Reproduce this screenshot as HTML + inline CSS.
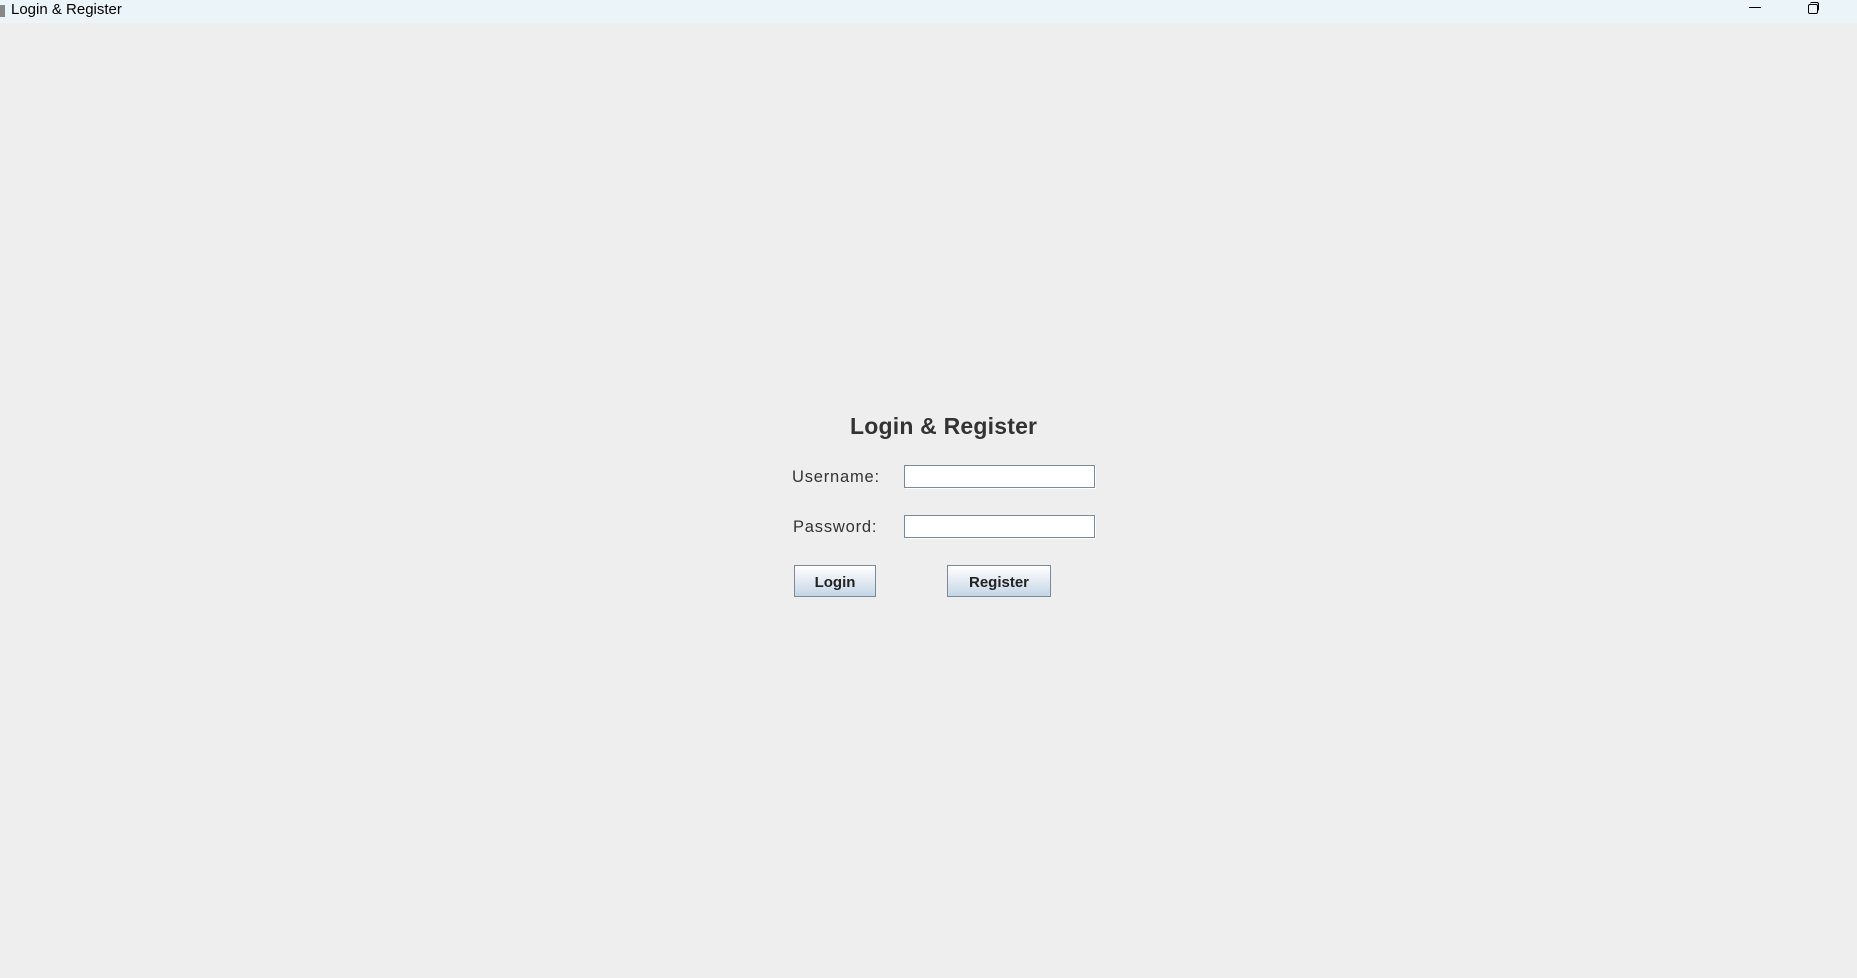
<!DOCTYPE html>
<html><head><style>
body{margin:0;width:1857px;height:978px;background:#eeeeee;font-family:"Liberation Sans",sans-serif;position:relative;overflow:hidden}
.tb{position:absolute;left:0;top:0;width:1857px;height:23px;background:#ebf4f9}
.t{position:absolute;color:#333}
.f{position:absolute;background:#fff;border:1px solid #7a8a99;box-shadow:1px 1px 0 #fff}
.b{position:absolute;border:1px solid #7a8a99;background:linear-gradient(#ffffff,#dde6f0 60%,#c4d5e6);font-weight:bold;font-size:15px;color:#222;text-align:center;line-height:33px;box-sizing:border-box}
</style></head><body>
<div class="tb"></div>
<div style="position:absolute;left:0;top:5px;width:5px;height:12px;background:#888"></div>
<div class="t" style="left:11px;top:1px;font-size:15px;line-height:18px;color:#000">Login &amp; Register</div>
<div style="position:absolute;left:1749px;top:7px;width:12px;height:1px;background:#000"></div>
<div style="position:absolute;left:1808px;top:4px;width:8px;height:8px;border:1px solid #000;border-radius:2px"></div>
<div style="position:absolute;left:1810px;top:2px;width:8px;height:8px;border-top:1px solid #000;border-right:1px solid #000;border-radius:2px"></div>
<div class="t" style="left:850px;top:413px;font-size:23px;font-weight:bold;letter-spacing:0.2px">Login &amp; Register</div>
<div class="t" style="left:792px;top:468px;font-size:16.5px;letter-spacing:0.8px">Username:</div>
<div class="t" style="left:793px;top:518px;font-size:16.5px;letter-spacing:0.8px">Password:</div>
<div class="f" style="left:904px;top:465px;width:189px;height:21px"></div>
<div class="f" style="left:904px;top:515px;width:189px;height:21px"></div>
<div class="b" style="left:794px;top:565px;width:82px;height:32px">Login</div>
<div class="b" style="left:947px;top:565px;width:104px;height:32px">Register</div>
</body></html>
